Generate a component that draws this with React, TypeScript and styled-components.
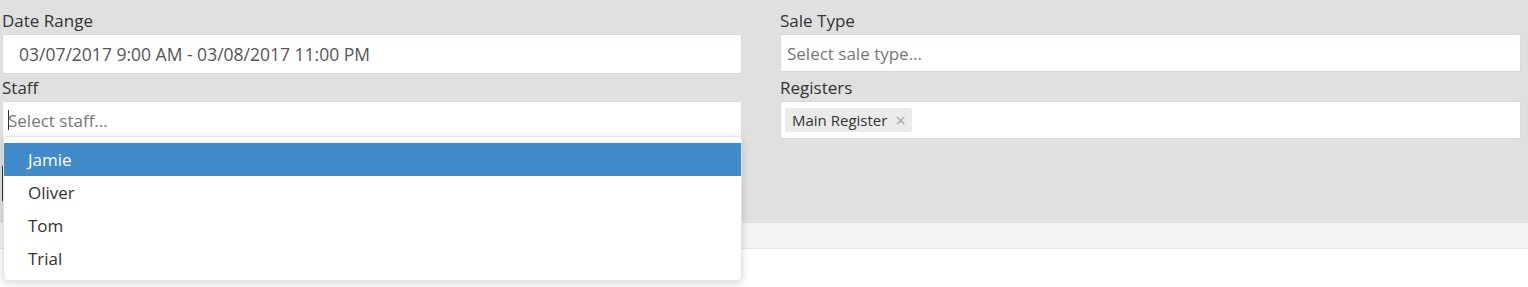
import styled, { createGlobalStyle } from 'styled-components'

const GlobalStyle = createGlobalStyle`
  html, body {
    margin: 0;
    padding: 0;
    background: #ffffff;
    font-family: 'Open Sans', 'Liberation Sans', sans-serif;
  }
  * {
    box-sizing: border-box;
  }
`

const FilterPanel = styled.section`
  background: #e0e0e0;
  padding: 10px 7px 20px 2px;
`

const FieldGrid = styled.div`
  display: grid;
  grid-template-columns: 740px 1fr;
  column-gap: 38px;
  row-gap: 3px;
  align-items: start;
`

const Field = styled.div`
  position: relative;
  display: flex;
  flex-direction: column;
`

const Label = styled.label`
  font-size: 17px;
  line-height: 22px;
  color: #333333;
  margin-bottom: 2px;
`

const Box = styled.div<{ $height: number; $indent: number; $size?: number }>`
  display: flex;
  align-items: center;
  gap: 4px;
  height: ${(p) => p.$height}px;
  padding-left: ${(p) => p.$indent}px;
  background: #ffffff;
  border: 1px solid #d3dcdc;
  border-radius: 2px;
  font-size: ${(p) => p.$size ?? 17}px;
  color: #555555;
`

const Placeholder = styled.span`
  color: #777777;
`

const Caret = styled.span`
  display: inline-block;
  width: 1px;
  height: 20px;
  background: #333333;
  margin-right: -5px;
`

const Tag = styled.span`
  display: inline-flex;
  align-items: center;
  gap: 8px;
  height: 24px;
  padding: 0 6px 0 7px;
  background: #ebebeb;
  border-radius: 3px;
  font-size: 15px;
  color: #333333;
`

const TagRemove = styled.span`
  color: #aaaaaa;
  font-size: 18px;
  line-height: 1;
`

const Menu = styled.ul`
  position: absolute;
  top: 59px;
  left: 1px;
  right: 0;
  margin: 0;
  padding: 6px 0 5px;
  list-style: none;
  background: #ffffff;
  border: 1px solid #e2e2e2;
  border-radius: 4px;
  box-shadow: 0 2px 8px rgba(0, 0, 0, 0.16);
  z-index: 10;
`

const MenuItem = styled.li<{ $active?: boolean }>`
  height: 33px;
  line-height: 33px;
  padding-left: 24px;
  font-size: 17px;
  color: ${(p) => (p.$active ? '#ffffff' : '#333333')};
  background: ${(p) => (p.$active ? '#418bca' : 'transparent')};
`

const Actions = styled.div`
  margin-top: 25px;
  display: flex;
`

const RunButton = styled.button`
  height: 39px;
  padding: 0 18px;
  border: none;
  border-radius: 4px;
  background: #2f3438;
  color: #ffffff;
  font-family: inherit;
  font-size: 15px;
`

const TabStrip = styled.div`
  height: 26px;
  background: #f4f4f4;
  border-bottom: 1px solid #e6e6e6;
`

const Content = styled.main`
  min-height: 38px;
  background: #ffffff;
`

const staff = ['Jamie', 'Oliver', 'Tom', 'Trial']

export default function App(): JSX.Element {
  return (
    <>
      <GlobalStyle />
      <FilterPanel>
        <FieldGrid>
          <Field>
            <Label>Date Range</Label>
            <Box $height={40} $indent={16} $size={17.5}>
              03/07/2017 9:00 AM - 03/08/2017 11:00 PM
            </Box>
          </Field>
          <Field>
            <Label>Sale Type</Label>
            <Box $height={38} $indent={6}>
              <Placeholder>Select sale type...</Placeholder>
            </Box>
          </Field>
          <Field>
            <Label>Staff</Label>
            <Box $height={38} $indent={5}>
              <Caret />
              <Placeholder>Select staff...</Placeholder>
            </Box>
            <Menu>
              {staff.map((name, i) => (
                <MenuItem key={name} $active={i === 0}>
                  {name}
                </MenuItem>
              ))}
            </Menu>
          </Field>
          <Field>
            <Label>Registers</Label>
            <Box $height={38} $indent={4}>
              <Tag>
                Main Register
                <TagRemove>×</TagRemove>
              </Tag>
            </Box>
          </Field>
        </FieldGrid>
        <Actions>
          <RunButton>Run Report</RunButton>
        </Actions>
      </FilterPanel>
      <TabStrip />
      <Content />
    </>
  )
}
